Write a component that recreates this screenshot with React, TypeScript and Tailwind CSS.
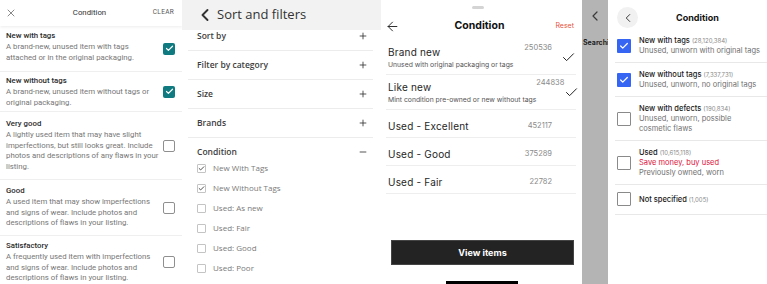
import React from "react";
import { X, Check, ChevronLeft, ArrowLeft, Plus, Minus } from "lucide-react";

type P1Row = { title: string; lines: string[]; checked: boolean; h: string; pt: string; border: boolean };

const p1Rows: P1Row[] = [
  {
    title: "New with tags",
    lines: ["A brand-new, unused item with tags", "attached or in the original packaging."],
    checked: true,
    h: "h-[46px]",
    pt: "pt-[5px]",
    border: true,
  },
  {
    title: "New without tags",
    lines: ["A brand-new, unused item without tags or", "original packaging."],
    checked: true,
    h: "h-[40px]",
    pt: "pt-[4px]",
    border: true,
  },
  {
    title: "Very good",
    lines: [
      "A lightly used item that may have slight",
      "imperfections, but still looks great. Include",
      "photos and descriptions of any flaws in your",
      "listing.",
    ],
    checked: false,
    h: "h-[68px]",
    pt: "pt-[7px]",
    border: true,
  },
  {
    title: "Good",
    lines: [
      "A used item that may show imperfections",
      "and signs of wear. Include photos and",
      "descriptions of flaws in your listing.",
    ],
    checked: false,
    h: "h-[56px]",
    pt: "pt-[6px]",
    border: true,
  },
  {
    title: "Satisfactory",
    lines: [
      "A frequently used item with imperfections",
      "and signs of wear. Include photos and",
      "descriptions of flaws in your listing.",
    ],
    checked: false,
    h: "h-[52px]",
    pt: "pt-[5px]",
    border: false,
  },
];

function Panel1() {
  return (
    <div className="w-[182px] h-full shrink-0 flex flex-col bg-white overflow-hidden font-['Roboto',sans-serif]">
      <div className="h-[26px] shrink-0 grid grid-cols-[1fr_auto_1fr] items-center pl-[5px] pr-[8px] shadow-[0_1px_3px_rgba(0,0,0,0.08)] relative z-10 bg-white">
        <X size={12} strokeWidth={1.4} className="text-[#555]" />
        <span className="text-[7.8px] text-[#333]">Condition</span>
        <span className="justify-self-end text-[6.5px] tracking-[0.3px] text-[#555]">CLEAR</span>
      </div>
      {p1Rows.map((r) => (
        <div
          key={r.title}
          className={`${r.h} shrink-0 flex items-center pl-[6px] pr-[7px] ${r.border ? "border-b border-[#efefef]" : ""}`}
        >
          <div className={`self-start ${r.pt} flex-1 min-w-0`}>
            <div className="text-[7.8px] leading-[10.8px] font-medium text-[#2a2a2a]">{r.title}</div>
            {r.lines.map((l) => (
              <div key={l} className="text-[7.8px] leading-[10.8px] text-[#777] whitespace-nowrap">
                {l}
              </div>
            ))}
          </div>
          {r.checked ? (
            <div className="w-[12px] h-[12px] shrink-0 rounded-[2px] bg-[#0f7a80] flex items-center justify-center">
              <Check size={9} strokeWidth={3.2} className="text-white" />
            </div>
          ) : (
            <div className="w-[12px] h-[12px] shrink-0 rounded-[2px] border border-[#8f8f8f] bg-white" />
          )}
        </div>
      ))}
    </div>
  );
}

const p2Sections = ["Filter by category", "Size", "Brands"];
const p2Options = [
  { label: "New With Tags", checked: true },
  { label: "New Without Tags", checked: true },
  { label: "Used: As new", checked: false },
  { label: "Used: Fair", checked: false },
  { label: "Used: Good", checked: false },
  { label: "Used: Poor", checked: false },
];

function Panel2() {
  return (
    <div className="w-[199px] h-full shrink-0 flex flex-col bg-white overflow-hidden font-['Open_Sans',sans-serif]">
      <div className="h-[30px] shrink-0 bg-[#f2f2f2] flex items-center pl-[13px] gap-[2px]">
        <ChevronLeft size={20} strokeWidth={2.3} className="text-[#333]" />
        <span className="text-[13px] font-medium text-[#333]">Sort and filters</span>
      </div>
      <div className="ml-[6px] mr-[8px] flex flex-col">
        <div className="h-[21px] border-b border-[#ececec] flex items-start justify-between pl-[9px] pr-[5px]">
          <span className="text-[8.5px] leading-[12px] font-semibold text-[#3d3d3d]">Sort by</span>
          <span className="h-[12px] flex items-center">
            <Plus size={10} strokeWidth={2} className="text-[#333]" />
          </span>
        </div>
        {p2Sections.map((s) => (
          <div
            key={s}
            className="h-[29px] border-b border-[#ececec] flex items-start justify-between pt-[8px] pl-[9px] pr-[5px]"
          >
            <span className="text-[8.5px] leading-[12px] font-semibold text-[#3d3d3d]">{s}</span>
            <span className="h-[12px] flex items-center">
              <Plus size={10} strokeWidth={2} className="text-[#333]" />
            </span>
          </div>
        ))}
        <div className="h-[20px] flex items-start justify-between pt-[8px] pl-[9px] pr-[5px]">
          <span className="text-[8.5px] leading-[12px] font-semibold text-[#3d3d3d]">Condition</span>
          <span className="h-[12px] flex items-center">
            <Minus size={10} strokeWidth={2} className="text-[#333]" />
          </span>
        </div>
        {p2Options.map((o) => (
          <div key={o.label} className="h-[20px] flex items-center pl-[9px] gap-[7px]">
            <div className="w-[9px] h-[9px] border border-[#c4c4c4] rounded-[1px] flex items-center justify-center bg-white">
              {o.checked && <Check size={7} strokeWidth={3.2} className="text-[#444]" />}
            </div>
            <span className="text-[8px] text-[#7a7a7a]">{o.label}</span>
          </div>
        ))}
      </div>
    </div>
  );
}

const p3Rows = [
  { name: "Brand new", desc: "Unused with original packaging or tags", count: "250536", checked: true },
  { name: "Like new", desc: "Mint condition pre-owned or new without tags", count: "244838", checked: true },
  { name: "Used - Excellent", desc: "", count: "452117", checked: false },
  { name: "Used - Good", desc: "", count: "375289", checked: false },
  { name: "Used - Fair", desc: "", count: "22782", checked: false },
];

function Panel3() {
  return (
    <div className="w-[201px] h-full shrink-0 flex flex-col bg-white overflow-hidden font-['Inter',sans-serif]">
      <div className="h-[12px] shrink-0 pt-[6px] pl-[91px]">
        <div className="w-[12px] h-[3px] rounded-full bg-[#d4d4d4]" />
      </div>
      <div className="h-[28px] shrink-0 grid grid-cols-[1fr_auto_1fr] items-center pl-[4px] pr-[8px]">
        <ArrowLeft size={15} strokeWidth={1.5} className="text-[#222]" />
        <span className="text-[10.5px] font-bold text-[#111]">Condition</span>
        <span className="justify-self-end text-[7px] text-[#e5533d]">Reset</span>
      </div>
      <div className="ml-[5px] mr-[6px] flex flex-col">
        {p3Rows.map((r) =>
          r.desc ? (
            <div key={r.name} className="h-[35px] border-b border-[#eeeeee] flex pl-[2px]">
              <div className="flex-1 pt-[5px]">
                <div className="text-[10px] leading-[14px] tracking-[0.2px] text-[#262626]">{r.name}</div>
                <div className="mt-[1px] text-[6.8px] leading-[10px] text-[#555] whitespace-nowrap">{r.desc}</div>
              </div>
              <div className="pt-[3px] text-[7.5px] leading-[10px] text-[#8a8a8a]">{r.count}</div>
              <div className="w-[24px] flex items-center justify-end">
                <Check size={15} strokeWidth={1.6} className="text-[#222]" />
              </div>
            </div>
          ) : (
            <div key={r.name} className="h-[28px] border-b border-[#eeeeee] flex pl-[2px]">
              <div className="flex-1 pt-[9px] text-[10px] leading-[14px] tracking-[0.2px] text-[#262626]">{r.name}</div>
              <div className="pt-[11px] text-[7.5px] leading-[10px] text-[#8a8a8a]">{r.count}</div>
              <div className="w-[24px]" />
            </div>
          )
        )}
      </div>
      <div className="mt-[46px] ml-[10px] mr-[8px] h-[25px] shrink-0 bg-[#232323] border border-[#444] flex items-center justify-center">
        <span className="text-[9px] font-bold text-white">View items</span>
      </div>
      <div className="mt-[16px] ml-[65px] w-[72px] h-[4px] shrink-0 bg-black" />
    </div>
  );
}

function Panel4() {
  return (
    <div className="w-[26px] h-full shrink-0 bg-[#b4b4b4] overflow-hidden font-['Inter',sans-serif]">
      <div className="h-[32px] flex items-center pl-[5px]">
        <ChevronLeft size={16} strokeWidth={1.8} className="text-[#3a3a3a]" />
      </div>
      <div className="mt-[6px] pl-[1px] whitespace-nowrap text-[7px] leading-[10px] font-bold text-[#1f1f1f]">
        Searching
      </div>
    </div>
  );
}

const p5Rows = [
  { title: "New with tags", count: "(28,120,384)", red: "", lines: ["Unused, unworn with original tags"], checked: true },
  { title: "New without tags", count: "(7,337,731)", red: "", lines: ["Unused, unworn, no original tags"], checked: true },
  {
    title: "New with defects",
    count: "(190,834)",
    red: "",
    lines: ["Unused, unworn, possible", "cosmetic flaws"],
    checked: false,
  },
  { title: "Used", count: "(10,615,118)", red: "Save money, buy used", lines: ["Previously owned, worn"], checked: false },
  { title: "Not specified", count: "(1,005)", red: "", lines: [], checked: false },
];

function Panel5() {
  return (
    <div className="w-[159px] h-full shrink-0 bg-white overflow-hidden font-['Inter',sans-serif]">
      <div className="h-[29px] flex items-start pt-[7px] pl-[9px]">
        <div className="w-[21px] h-[21px] rounded-full bg-[#f1f1f1] flex items-center justify-center">
          <ChevronLeft size={14} strokeWidth={1.5} className="text-[#222]" />
        </div>
        <span className="ml-[38px] h-[21px] leading-[21px] text-[9px] font-bold text-[#111]">Condition</span>
      </div>
      <div className="ml-[7px] flex flex-col">
        {p5Rows.map((r) => (
          <div
            key={r.title}
            className={`flex items-center border-b border-[#e8e8e8] pl-[2px] ${
              r.lines.length === 0 ? "pt-[7px] pb-[8px]" : "pt-[6px] pb-[6px]"
            }`}
          >
            {r.checked ? (
              <div className="w-[14px] h-[14px] shrink-0 rounded-[1px] bg-[#3665f3] flex items-center justify-center">
                <Check size={10} strokeWidth={3} className="text-white" />
              </div>
            ) : (
              <div className="w-[14px] h-[14px] shrink-0 rounded-[1px] border border-[#8a8a8a] bg-white" />
            )}
            <div className="ml-[8px] flex flex-col whitespace-nowrap">
              <div className="text-[7.5px] leading-[11px] font-medium text-[#191919]">
                {r.title} <span className="text-[6px] font-normal text-[#8a8a8a]">{r.count}</span>
              </div>
              {r.red && <div className="text-[7.5px] leading-[10px] text-[#e0103a]">{r.red}</div>}
              {r.lines.map((l) => (
                <div key={l} className="text-[7.5px] leading-[10px] text-[#707070]">
                  {l}
                </div>
              ))}
            </div>
          </div>
        ))}
      </div>
    </div>
  );
}

export default function App() {
  return (
    <div className="w-[767px] h-[284px] overflow-hidden flex bg-white">
      <Panel1 />
      <Panel2 />
      <Panel3 />
      <Panel4 />
      <Panel5 />
    </div>
  );
}
